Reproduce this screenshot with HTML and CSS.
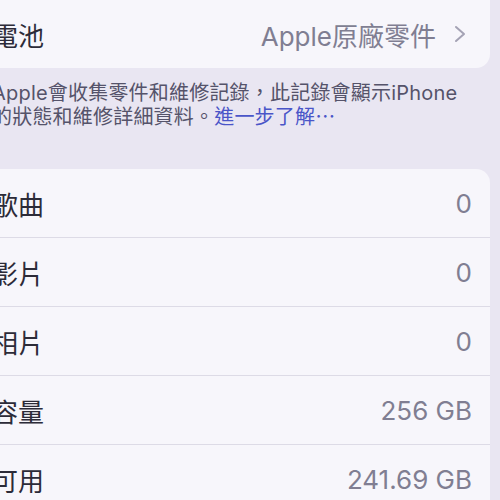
FILE: index.html
```html
<!DOCTYPE html>
<html lang="zh-Hant">
<head>
    <meta charset="UTF-8">
    <meta name="viewport" content="width=device-width, initial-scale=1.0">
    <title>關於本機</title>
    <link rel="stylesheet" href="styles.css">
</head>
<body>
    <div class="screen">
        <!-- 零件 -->
        <div class="card card-top">
            <div class="row">
                <span class="label">電池</span>
                <span class="value">Apple原廠零件
                    <svg class="chevron" width="12" height="18" viewBox="0 0 12 18">
                        <polyline points="2,2 10,9 2,16" fill="none" stroke="#a4a2b4" stroke-width="2" stroke-linecap="round" stroke-linejoin="round"/>
                    </svg>
                </span>
            </div>
        </div>
        <p class="footer">Apple會收集零件和維修記錄，此記錄會顯示iPhone<br>的狀態和維修詳細資料。<a href="#">進一步了解⋯</a></p>

        <!-- 媒體與容量 -->
        <div class="card">
            <div class="row"><span class="label">歌曲</span><span class="value">0</span></div>
            <div class="row"><span class="label">影片</span><span class="value">0</span></div>
            <div class="row"><span class="label">相片</span><span class="value">0</span></div>
            <div class="row"><span class="label">容量</span><span class="value">256 GB</span></div>
            <div class="row"><span class="label">可用</span><span class="value">241.69 GB</span></div>
        </div>
    </div>
</body>
</html>
```

FILE: styles.css
```css
html, body {
    margin: 0;
    height: 100%;
    overflow: hidden;
}

body {
    background-color: #e9e6f2;
    font-family: "Inter", "Noto Sans CJK TC", sans-serif;
    color: #2c2b38;
}

.screen {
    width: 498px;
    margin-left: -8px;
}

.card {
    background-color: #f7f6fb;
    border-radius: 0 14px 14px 0;
}

.card-top {
    border-radius: 0 0 14px 0;
}

.row {
    display: flex;
    align-items: center;
    justify-content: space-between;
    height: 68px;
    padding-right: 18px;
    font-size: 26px;
    border-bottom: 1px solid #dddbe6;
}

.row:last-child {
    border-bottom: none;
}

.value {
    display: flex;
    align-items: center;
    gap: 18px;
    color: #807e92;
}

.chevron {
    margin-right: 6px;
}

.footer {
    margin: 0;
    padding: 13px 0 0 0;
    height: 88px;
    font-size: 20px;
    line-height: 24px;
    color: #55536a;
    letter-spacing: 0.2px;
}

.footer a {
    color: #4a55c8;
    text-decoration: none;
}
```
